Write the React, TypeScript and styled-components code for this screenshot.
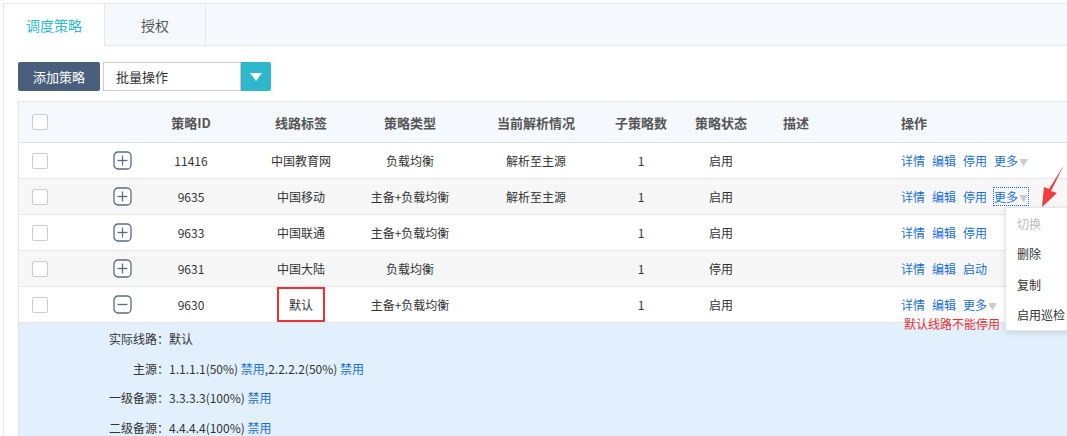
import styled, { createGlobalStyle } from "styled-components";

const Global = createGlobalStyle`
  body { margin: 0; font-family: "Microsoft YaHei", "Noto Sans CJK SC", "Liberation Sans", sans-serif; font-size: 12px; color: #333; background: #fff; }
`;

type Row = { id: string; tag: string; type: string; parse: string; status: string; toggle: string; more: boolean; open?: boolean };

const ROWS: Row[] = [
  { id: "11416", tag: "中国教育网", type: "负载均衡", parse: "解析至主源", status: "启用", toggle: "停用", more: true },
  { id: "9635", tag: "中国移动", type: "主备+负载均衡", parse: "解析至主源", status: "启用", toggle: "停用", more: true },
  { id: "9633", tag: "中国联通", type: "主备+负载均衡", parse: "", status: "启用", toggle: "停用", more: false },
  { id: "9631", tag: "中国大陆", type: "负载均衡", parse: "", status: "停用", toggle: "启动", more: false },
  { id: "9630", tag: "默认", type: "主备+负载均衡", parse: "", status: "启用", toggle: "", more: true, open: true },
];

const COLS = "89px 28px 110px 110px 108px 144px 66px 94px 56px 1fr";

const ExpandIcon = ({ open }: { open?: boolean }) => (
  <svg width="19" height="19" viewBox="0 0 19 19">
    <rect x="1" y="1" width="17" height="17" rx="4" fill="#fff" stroke="#5a6b85" strokeWidth="1.3" />
    <line x1="4.5" y1="9.5" x2="14.5" y2="9.5" stroke="#5a6b85" strokeWidth="1.3" />
    {!open && <line x1="9.5" y1="4.5" x2="9.5" y2="14.5" stroke="#5a6b85" strokeWidth="1.3" />}
  </svg>
);

const App = () => (
  <Page>
    <Global />
    <Tabs>
      <Tab active>调度策略</Tab>
      <Tab>授权</Tab>
    </Tabs>
    <Body>
      <Toolbar>
        <AddButton>添加策略</AddButton>
        <Select>批量操作</Select>
        <SelectArrow>
          <svg width="12" height="8" viewBox="0 0 12 8"><path d="M0 0h12L6 8z" fill="#fff" /></svg>
        </SelectArrow>
      </Toolbar>
      <Table>
        <HeadRow>
          <Cell><Check /></Cell>
          <Cell />
          <Cell>策略ID</Cell>
          <Cell>线路标签</Cell>
          <Cell>策略类型</Cell>
          <Cell>当前解析情况</Cell>
          <Cell>子策略数</Cell>
          <Cell>策略状态</Cell>
          <Cell>描述</Cell>
          <OpsCell>操作</OpsCell>
        </HeadRow>
        {ROWS.map((r, i) => (
          <DataRow key={r.id} striped={i % 2 === 1}>
            <Cell><Check /></Cell>
            <Cell><ExpandIcon open={r.open} /></Cell>
            <Cell>{r.id}</Cell>
            <Cell>{r.open ? <Boxed>{r.tag}</Boxed> : r.tag}</Cell>
            <Cell>{r.type}</Cell>
            <Cell>{r.parse}</Cell>
            <Cell>1</Cell>
            <Cell>{r.status}</Cell>
            <Cell />
            <OpsCell>
              <Link>详情</Link>
              <Link>编辑</Link>
              {r.toggle && <Link>{r.toggle}</Link>}
              {r.more && (
                <More focused={i === 1}>
                  更多<Caret>▼</Caret>
                </More>
              )}
              {r.open && <Note>默认线路不能停用</Note>}
              {i === 1 && (
                <>
                  <Arrow width="30" height="42" viewBox="0 0 30 42">
                    <path d="M26 0 L13 26 L19 28 L4 42 L6 22 L11 24 Z" fill="#f03c3c" />
                  </Arrow>
                  <Menu>
                    <MenuItem disabled>切换</MenuItem>
                    <MenuItem>删除</MenuItem>
                    <MenuItem>复制</MenuItem>
                    <MenuItem>启用巡检</MenuItem>
                  </Menu>
                </>
              )}
            </OpsCell>
          </DataRow>
        ))}
        <Detail>
          <DLine><DLabel>实际线路：</DLabel>默认</DLine>
          <DLine><DLabel>主源：</DLabel>1.1.1.1(50%)&nbsp;<Link>禁用</Link>,2.2.2.2(50%)&nbsp;<Link>禁用</Link></DLine>
          <DLine><DLabel>一级备源：</DLabel>3.3.3.3(100%)&nbsp;<Link>禁用</Link></DLine>
          <DLine><DLabel>二级备源：</DLabel>4.4.4.4(100%)&nbsp;<Link>禁用</Link></DLine>
        </Detail>
      </Table>
    </Body>
  </Page>
);

const Page = styled.div`
  margin: 3px 0 0 3px;
  border-left: 1px solid #e3e6eb;
  border-top: 1px solid #e3e6eb;
  height: 433px;
  overflow: hidden;
`;
const Tabs = styled.div`
  display: flex;
  height: 41px;
  background: #f5f8fc;
  border-bottom: 1px solid #e3e6eb;
`;
const Tab = styled.div<{ active?: boolean }>`
  width: 100px;
  display: flex;
  align-items: center;
  justify-content: center;
  font-size: 14px;
  color: ${(p) => (p.active ? "#2fb8cc" : "#555")};
  background: ${(p) => (p.active ? "#fff" : "transparent")};
  border-right: 1px solid #e3e6eb;
  margin-bottom: ${(p) => (p.active ? "-1px" : "0")};
`;
const Body = styled.div`
  padding: 16px 0 0 14px;
`;
const Toolbar = styled.div`
  display: flex;
  height: 29px;
  margin-bottom: 10px;
`;
const AddButton = styled.div`
  width: 82px;
  background: #4a5f7e;
  color: #fff;
  font-size: 13px;
  display: flex;
  align-items: center;
  justify-content: center;
  border-radius: 2px;
  margin-right: 3px;
`;
const Select = styled.div`
  width: 124px;
  border: 1px solid #ccc;
  padding-left: 12px;
  display: flex;
  align-items: center;
  font-size: 13px;
  color: #333;
`;
const SelectArrow = styled.div`
  width: 30px;
  background: #2fb8cc;
  display: flex;
  align-items: center;
  justify-content: center;
  border-radius: 0 2px 2px 0;
`;
const Table = styled.div`
  border-left: 1px solid #e3e6eb;
  border-top: 1px solid #e3e6eb;
`;
const HeadRow = styled.div`
  display: grid;
  grid-template-columns: ${COLS};
  height: 40px;
  background: #f5f8fc;
  border-bottom: 1px solid #dfe3e8;
  font-size: 13px;
  font-weight: bold;
  color: #555;
`;
const DataRow = styled.div<{ striped?: boolean }>`
  display: grid;
  grid-template-columns: ${COLS};
  height: 35px;
  background: ${(p) => (p.striped ? "#f7f7f7" : "#fff")};
  border-bottom: 1px solid #e3e6eb;
`;
const Cell = styled.div`
  display: flex;
  align-items: center;
  justify-content: center;
  white-space: nowrap;
  &:first-child { justify-content: flex-start; padding-left: 13px; }
`;
const OpsCell = styled.div`
  position: relative;
  display: flex;
  align-items: center;
  padding-left: 77px;
  gap: 7px;
  white-space: nowrap;
`;
const Check = styled.span`
  width: 14px;
  height: 14px;
  border: 1px solid #ccc;
  border-radius: 2px;
  background: #fff;
`;
const Boxed = styled.span`
  border: 2px solid #e83232;
  padding: 7px 10px;
  color: #333;
`;
const Link = styled.span`
  color: #1a6fd6;
`;
const More = styled.span<{ focused?: boolean }>`
  color: #1a6fd6;
  outline: ${(p) => (p.focused ? "1px dotted #1a6fd6" : "none")};
`;
const Caret = styled.span`
  color: #ccc;
  font-size: 9px;
  margin-left: 1px;
`;
const Note = styled.span`
  position: absolute;
  left: 80px;
  top: 28px;
  color: #e83232;
`;
const Arrow = styled.svg`
  position: absolute;
  left: 214px;
  top: -14px;
`;
const Menu = styled.div`
  position: absolute;
  left: 181px;
  top: 28px;
  width: 70px;
  background: #fff;
  border: 1px solid #e3e6eb;
  box-shadow: 0 2px 6px rgba(0, 0, 0, 0.12);
  padding: 0;
  z-index: 2;
`;
const MenuItem = styled.div<{ disabled?: boolean }>`
  height: 30.5px;
  display: flex;
  align-items: center;
  padding-left: 11px;
  color: ${(p) => (p.disabled ? "#bbb" : "#333")};
`;
const Detail = styled.div`
  background: #e1f0fc;
  padding: 1px 0 0 0;
  height: 120px;
`;
const DLine = styled.div`
  height: 29.5px;
  display: flex;
  align-items: center;
  white-space: nowrap;
`;
const DLabel = styled.span`
  width: 150px;
  text-align: right;
`;

export default App;
